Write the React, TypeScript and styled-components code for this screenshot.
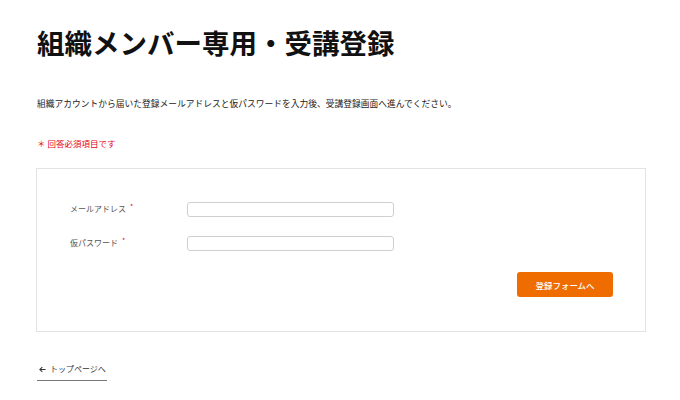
import React from "react";
import styled, { createGlobalStyle } from "styled-components";

const Global = createGlobalStyle`
  html, body { margin: 0; padding: 0; background: #fff; }
  body { font-family: "Noto Sans CJK JP", "Noto Sans", sans-serif; color: #222; }
  * { box-sizing: border-box; }
`;

const Page = styled.main`
  width: 680px;
  height: 400px;
  padding: 25px 34px 0 36px;
  display: flex;
  flex-direction: column;
`;

const Title = styled.h1`
  margin: 0 0 0 1px;
  font-size: 27.5px;
  line-height: 34px;
  font-weight: 700;
  color: #111;
  letter-spacing: 0;
`;

const Lead = styled.p`
  margin: 39px 0 0 1px;
  font-size: 8.75px;
  line-height: 12px;
  color: #222;
`;

const Required = styled.p`
  margin: 27px 0 0 1px;
  font-size: 8.5px;
  line-height: 12px;
  color: #e60012;
`;

const Card = styled.section`
  margin-top: 19px;
  border: 1px solid #e3e3e3;
  padding: 32px 32px 34px 33px;
  display: flex;
  flex-direction: column;
`;

const Row = styled.div`
  display: flex;
  align-items: center;
  & + & { margin-top: 18px; }
`;

const Label = styled.label`
  width: 117px;
  font-size: 8px;
  color: #555;
  line-height: 15px;
`;

const Star = styled.span`
  color: #e60012;
  font-size: 7px;
  position: relative;
  top: -3px;
  margin-left: 4px;
`;

const Input = styled.input`
  width: 207px;
  height: 15px;
  border: 1px solid #cfcfcf;
  border-radius: 3px;
  background: #fff;
  padding: 0 4px;
  outline: none;
`;

const Actions = styled.div`
  display: flex;
  justify-content: flex-end;
  margin-top: 21px;
`;

const Button = styled.button`
  width: 96px;
  height: 25px;
  border: none;
  border-radius: 3px;
  background: #ee6c00;
  color: #fff;
  font-family: inherit;
  font-size: 8.5px;
  font-weight: 500;
  cursor: pointer;
`;

const BackLink = styled.a`
  margin-top: 31px;
  margin-left: 1px;
  align-self: flex-start;
  display: flex;
  align-items: center;
  gap: 4px;
  padding: 0 1px 5px 2px;
  white-space: nowrap;
  border-bottom: 1.5px solid #777;
  font-size: 8px;
  line-height: 12px;
  color: #333;
  text-decoration: none;
`;

const Arrow = () => (
  <svg width="7" height="7" viewBox="0 0 8 8" fill="none" stroke="#333" strokeWidth="1.2">
    <path d="M7.5 4H1M3.8 1.2L1 4l2.8 2.8" />
  </svg>
);

export default function App() {
  return (
    <>
      <Global />
      <Page>
        <Title>組織メンバー専用・受講登録</Title>
        <Lead>
          組織アカウントから届いた登録メールアドレスと仮パスワードを入力後、受講登録画面へ進んでください。
        </Lead>
        <Required>＊ 回答必須項目です</Required>
        <Card>
          <Row>
            <Label>
              メールアドレス<Star>*</Star>
            </Label>
            <Input type="email" />
          </Row>
          <Row>
            <Label>
              仮パスワード<Star>*</Star>
            </Label>
            <Input type="password" />
          </Row>
          <Actions>
            <Button>登録フォームへ</Button>
          </Actions>
        </Card>
        <BackLink href="#">
          <Arrow />
          トップページへ
        </BackLink>
      </Page>
    </>
  );
}
